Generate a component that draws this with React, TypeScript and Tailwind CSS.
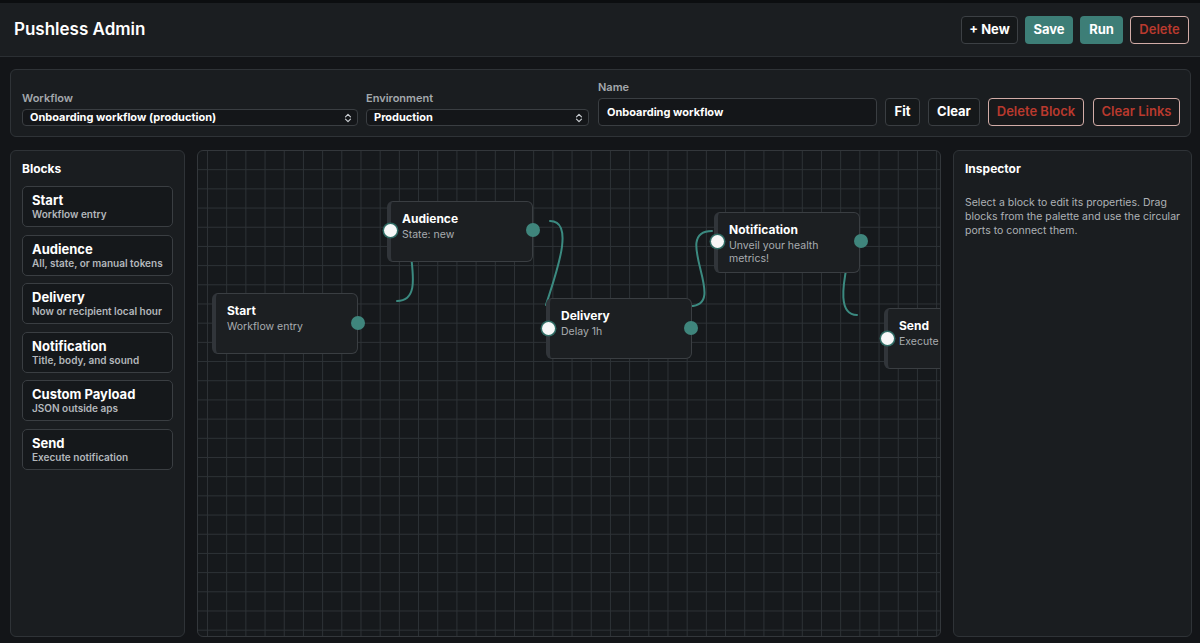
import React from "react";

const FONT = { fontFamily: "Inter, 'Noto Sans', 'Liberation Sans', sans-serif" };

function Chevrons() {
  return (
    <svg width="8" height="10" viewBox="0 0 8 10" fill="none" stroke="#c9cdd1" strokeWidth="1.2" strokeLinecap="round" strokeLinejoin="round">
      <path d="M1.5 3.8 L4 1.3 L6.5 3.8" />
      <path d="M1.5 6.2 L4 8.7 L6.5 6.2" />
    </svg>
  );
}

function FakeSelect({ value }: { value: string }) {
  return (
    <div className="h-[17px] rounded-[4px] border border-[#3a3e42] bg-[#141619] flex items-center justify-between pl-[7px] pr-[5px]">
      <span className="text-[11px] font-bold text-white leading-none">{value}</span>
      <Chevrons />
    </div>
  );
}

const blocks = [
  { t: "Start", s: "Workflow entry" },
  { t: "Audience", s: "All, state, or manual tokens" },
  { t: "Delivery", s: "Now or recipient local hour" },
  { t: "Notification", s: "Title, body, and sound" },
  { t: "Custom Payload", s: "JSON outside aps" },
  { t: "Send", s: "Execute notification" },
];

// node positions in page coordinates
const nodes = [
  { t: "Start", s: "Workflow entry", x: 212, y: 293 },
  { t: "Audience", s: "State: new", x: 387, y: 201 },
  { t: "Delivery", s: "Delay 1h", x: 546, y: 298 },
  { t: "Notification", s: "Unveil your health metrics!", x: 714, y: 212 },
  { t: "Send", s: "Execute notification", x: 884, y: 308 },
];

const ports = [
  { x: 358, y: 323, out: true },
  { x: 390, y: 230, out: false },
  { x: 533, y: 230, out: true },
  { x: 548, y: 328, out: false },
  { x: 691, y: 328, out: true },
  { x: 717, y: 241, out: false },
  { x: 861, y: 241, out: true },
  { x: 887, y: 338, out: false },
];

const OX = 198;
const OY = 151;

function CanvasNode({ t, s, x, y }: { t: string; s: string; x: number; y: number }) {
  return (
    <div
      className="absolute w-[146px] h-[61px] rounded-[6px] border border-[#3a3e42] border-l-[4px] border-l-[#31353a] bg-[#1c1f22] pl-[11px] pr-[20px] pt-[9px]"
      style={{ left: x - OX, top: y - OY }}
    >
      <div className="text-[12px] font-bold leading-[15px] text-white whitespace-nowrap">{t}</div>
      <div className="mt-[2px] text-[10.5px] leading-[13px] text-[#a8acb0] whitespace-nowrap">
        {t === "Notification" ? (
          <>
            Unveil your health
            <br />
            metrics!
          </>
        ) : (
          s
        )}
      </div>
    </div>
  );
}

function Port({ x, y, out }: { x: number; y: number; out: boolean }) {
  const d = out ? 14 : 13;
  return (
    <div
      className={
        out
          ? "absolute rounded-full bg-[#3f857c]"
          : "absolute rounded-full bg-[#f7f8f8] shadow-[0_0_0_1.5px_#2f6a63]"
      }
      style={{ left: x - OX - d / 2, top: y - OY - d / 2, width: d, height: d }}
    />
  );
}

export default function App() {
  return (
    <div className="w-[1200px] h-[643px] overflow-hidden bg-[#131518] text-white" style={FONT}>
      <header className="h-[57px] border-t-[3px] border-t-[#0c0e10] border-b border-b-[#2b2f33] bg-[#1b1e21] flex items-center justify-between pl-[14px] pr-[11px]">
        <h1 className="text-[17px] font-semibold">Pushless Admin</h1>
        <div className="flex items-center gap-[7px]">
          <button className="h-[28px] w-[57px] rounded-[4px] border border-[#3c4044] bg-[#15181a] text-[13px] font-bold text-white">
            + New
          </button>
          <button className="h-[28px] w-[48px] rounded-[4px] bg-[#3d7e77] text-[13px] font-bold text-white">
            Save
          </button>
          <button className="h-[28px] w-[43px] rounded-[4px] bg-[#3d7e77] text-[13px] font-bold text-white">
            Run
          </button>
          <button className="h-[28px] w-[59px] rounded-[4px] border border-[#d2aca7] bg-[#18191b] text-[13px] font-semibold text-[#b9392e]">
            Delete
          </button>
        </div>
      </header>

      <div className="pl-[10px] pr-[8px]">
        <div className="mt-[12px] mr-[1px] h-[68px] rounded-[6px] border border-[#2f3337] bg-[#1a1d20] flex items-end pl-[11px] pr-[10px] pb-[10px]">
          <div className="w-[336px] flex flex-col gap-[5px]">
            <label className="text-[11px] font-semibold leading-[12px] text-[#a4a8ac]">Workflow</label>
            <FakeSelect value="Onboarding workflow (production)" />
          </div>
          <div className="ml-[8px] w-[223px] flex flex-col gap-[5px]">
            <label className="text-[11px] font-semibold leading-[12px] text-[#a4a8ac]">Environment</label>
            <FakeSelect value="Production" />
          </div>
          <div className="ml-[9px] w-[279px] flex flex-col gap-[5px]">
            <label className="text-[11px] font-semibold leading-[12px] text-[#a4a8ac]">Name</label>
            <div className="h-[28px] rounded-[4px] border border-[#3a3e42] bg-[#141619] flex items-center pl-[8px]">
              <span className="text-[11px] font-bold text-white">Onboarding workflow</span>
            </div>
          </div>
          <button className="ml-[8px] h-[28px] w-[35px] rounded-[4px] border border-[#3a3e42] bg-[#15181a] text-[13px] font-bold text-white">
            Fit
          </button>
          <button className="ml-[8px] h-[28px] w-[52px] rounded-[4px] border border-[#3a3e42] bg-[#15181a] text-[13px] font-bold text-white">
            Clear
          </button>
          <button className="ml-[8px] h-[28px] w-[96px] rounded-[4px] border border-[#d2aca7] bg-[#18191b] text-[13px] font-semibold text-[#b9392e]">
            Delete Block
          </button>
          <button className="ml-[9px] h-[28px] w-[87px] rounded-[4px] border border-[#d2aca7] bg-[#18191b] text-[13px] font-semibold text-[#b9392e]">
            Clear Links
          </button>
        </div>

        <div className="mt-[13px] h-[487px] flex gap-[12px]">
          <aside className="w-[175px] h-full rounded-[6px] border border-[#2f3337] bg-[#1a1d20] pt-[11px] px-[11px]">
            <h2 className="text-[12px] font-bold leading-[14px]">Blocks</h2>
            <div className="mt-[10px] flex flex-col gap-[7.6px]">
              {blocks.map((b) => (
                <div
                  key={b.t}
                  className="h-[41px] rounded-[5px] border border-[#3a3e42] bg-[#15181b] pl-[9px] pt-[5px]"
                >
                  <div className="text-[13px] font-bold leading-[16px] text-white">{b.t}</div>
                  <div className="text-[10px] font-semibold leading-[13px] text-[#b3b7bb]">{b.s}</div>
                </div>
              ))}
            </div>
          </aside>

          <div className="relative w-[744px] h-full overflow-hidden rounded-[6px] border border-[#33373b] bg-[#16191c] [background-image:linear-gradient(to_right,#2d3236_1px,transparent_1px),linear-gradient(to_bottom,#2d3236_1px,transparent_1px)] [background-size:19.2px_19.2px] [background-position:9px_18.2px]">
            <svg
              className="absolute left-0 top-0"
              width="742"
              height="485"
              viewBox="198 151 742 485"
              fill="none"
              stroke="#3b8a80"
              strokeWidth="2"
              strokeLinecap="round"
            >
              <path d="M397 301 C418 301, 413 275, 411 255" />
              <path d="M550 221 C576 221, 555 276, 546 305" />
              <path d="M690 306 C730 306, 670 231, 712 231" />
              <path d="M847 265 C843 285, 838 315, 857 315" />
            </svg>
            {nodes.map((n) => (
              <CanvasNode key={n.t} {...n} />
            ))}
            {ports.map((p, i) => (
              <Port key={i} {...p} />
            ))}
          </div>

          <aside className="w-[239px] h-full rounded-[6px] border border-[#2f3337] bg-[#1a1d20] pt-[11px] px-[11px]">
            <h2 className="text-[12px] font-bold leading-[14px]">Inspector</h2>
            <p className="mt-[20px] text-[10.5px] leading-[14px] text-[#aeb2b6]">
              Select a block to edit its properties. Drag
              <br />
              blocks from the palette and use the circular
              <br />
              ports to connect them.
            </p>
          </aside>
        </div>
      </div>
    </div>
  );
}
